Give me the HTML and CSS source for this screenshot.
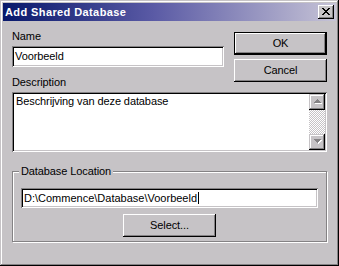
FILE: index.html
```html
<!DOCTYPE html>
<html>
<head>
<meta charset="utf-8">
<link rel="stylesheet" href="styles.css">
</head>
<body>
<div class="window">
  <div class="titlebar">
    <span class="title">Add Shared Database</span>
    <div class="close">
      <svg width="8" height="7" viewBox="0 0 8 7" shape-rendering="crispEdges"><path fill="#000" d="M0 0h2v1H0zM6 0h2v1H6zM1 1h2v1H1zM5 1h2v1H5zM2 2h4v1H2zM3 3h2v1H3zM2 4h4v1H2zM1 5h2v1H1zM5 5h2v1H5zM0 6h2v1H0zM6 6h2v1H6z"/></svg>
    </div>
  </div>
  <div class="body">
    <div class="top">
      <div class="label name-label">Name</div>
      <div class="field name-field">Voorbeeld</div>
      <div class="label desc-label">Description</div>
      <div class="buttons">
        <div class="btn default"><span class="btn-inner">OK</span></div>
        <div class="btn"><span class="btn-inner">Cancel</span></div>
      </div>
      <div class="textarea">
        <div class="textarea-text">Beschrijving van deze database</div>
        <div class="scrollbar">
          <div class="sb-btn">
            <svg width="8" height="5" viewBox="0 0 8 5" shape-rendering="crispEdges"><path fill="#fff" transform="translate(1 1)" d="M3 0h1v1H3zM2 1h3v1H2zM1 2h5v1H1zM0 3h7v1H0z"/><path fill="#848284" d="M3 0h1v1H3zM2 1h3v1H2zM1 2h5v1H1zM0 3h7v1H0z"/></svg>
          </div>
          <div class="sb-track"></div>
          <div class="sb-btn">
            <svg width="8" height="5" viewBox="0 0 8 5" shape-rendering="crispEdges"><path fill="#fff" transform="translate(1 1)" d="M0 0h7v1H0zM1 1h5v1H1zM2 2h3v1H2zM3 3h1v1H3z"/><path fill="#848284" d="M0 0h7v1H0zM1 1h5v1H1zM2 2h3v1H2zM3 3h1v1H3z"/></svg>
          </div>
        </div>
      </div>
    </div>
    <fieldset class="group">
      <legend class="group-legend">Database Location</legend>
      <div class="field path-field">D:\Commence\Database\Voorbeeld<span class="caret"></span></div>
      <div class="btn select-btn"><span class="btn-inner">Select...</span></div>
    </fieldset>
  </div>
</div>
</body>
</html>
```
FILE: styles.css
```css
* {
  box-sizing: border-box;
}

html,
body {
  margin: 0;
  padding: 0;
  background: #c6c3c6;
}

body {
  font-family: "Liberation Sans", Arial, sans-serif;
  font-size: 11px;
  line-height: 13px;
  letter-spacing: -0.1px;
  color: #000;
}

.window {
  width: 339px;
  height: 266px;
  padding: 3px;
  background: #c6c3c6;
  box-shadow:
    inset -1px -1px #000,
    inset 1px 1px #c6c3c6,
    inset -2px -2px #848284,
    inset 2px 2px #fff;
}

.titlebar {
  height: 18px;
  display: flex;
  align-items: center;
  justify-content: space-between;
  padding: 0 2px 0 2px;
  background: linear-gradient(90deg, #08186b 0%, #5a5aa5 45%, #c6c3d6 100%);
}

.title {
  color: #fff;
  font-weight: bold;
  font-size: 11px;
  letter-spacing: 0.4px;
}

.close {
  width: 16px;
  height: 14px;
  display: flex;
  align-items: flex-start;
  padding: 3px 0 0 4px;
  background: #c6c3c6;
  box-shadow:
    inset -1px -1px #000,
    inset 1px 1px #fff,
    inset -2px -2px #848284;
}

.close svg {
  display: block;
}

.body {
  padding: 9px 9px 0 9px;
}

.top {
  display: grid;
  grid-template-columns: 212px 93px;
  column-gap: 10px;
}

.label {
  grid-column: 1;
  height: 13px;
  white-space: nowrap;
}

.name-label {
  grid-row: 1;
}

.name-field {
  grid-row: 2;
  grid-column: 1;
  margin-top: 3px;
  height: 21px;
  line-height: 17px;
}

.desc-label {
  grid-row: 3;
  margin-top: 9px;
}

.field {
  background: #fff;
  padding: 2px 1px 2px 3px;
  white-space: nowrap;
  box-shadow:
    inset 1px 1px #848284,
    inset -1px -1px #fff,
    inset 2px 2px #000,
    inset -2px -2px #c6c3c6;
}

.buttons {
  grid-column: 2;
  grid-row: 1 / 4;
  margin-top: 2px;
  display: flex;
  flex-direction: column;
  gap: 4px;
}

.btn {
  width: 93px;
  height: 23px;
  display: flex;
  align-items: center;
  justify-content: center;
  background: #c6c3c6;
  box-shadow:
    inset -1px -1px #000,
    inset 1px 1px #fff,
    inset -2px -2px #848284;
}

.btn.default {
  box-shadow:
    inset 0 0 0 1px #000,
    inset -2px -2px #000,
    inset 2px 2px #fff,
    inset -3px -3px #848284;
}

.btn-inner {
  display: block;
}

.textarea {
  grid-column: 1 / 3;
  grid-row: 4;
  margin-top: 3px;
  height: 60px;
  display: flex;
  padding: 2px;
  background: #fff;
  box-shadow:
    inset 1px 1px #848284,
    inset -1px -1px #fff,
    inset 2px 2px #000,
    inset -2px -2px #c6c3c6;
}

.textarea-text {
  flex: 1;
  padding: 1px 2px;
}

.scrollbar {
  width: 16px;
  display: flex;
  flex-direction: column;
}

.sb-btn {
  width: 16px;
  height: 16px;
  display: flex;
  align-items: center;
  justify-content: center;
  padding: 0 0 1px 1px;
  background: #c6c3c6;
  box-shadow:
    inset -1px -1px #000,
    inset 1px 1px #c6c3c6,
    inset -2px -2px #848284,
    inset 2px 2px #fff;
}

.sb-btn svg {
  display: block;
}

.sb-track {
  flex: 1;
  background-color: #c6c3c6;
  background-image: conic-gradient(#fff 0 25%, #c6c3c6 0 50%, #fff 0 75%, #c6c3c6 0);
  background-size: 2px 2px;
}

.group {
  width: 314px;
  margin: 13px 0 0 0;
  padding: 0 8px 4px 8px;
  border: 1px solid #848284;
  box-shadow:
    inset 1px 1px #fff,
    1px 1px #fff;
}

.group-legend {
  padding: 0 2px;
  margin-left: -2px;
  background: #c6c3c6;
  line-height: 13px;
}

.path-field {
  width: 297px;
  height: 20px;
  margin-top: 10px;
  line-height: 16px;
  padding-left: 3px;
  letter-spacing: 0;
}

.caret {
  display: inline-block;
  width: 1px;
  height: 12px;
  background: #000;
  vertical-align: -2px;
  margin-left: 1px;
}

.select-btn {
  margin: 6px auto 0 auto;
}
```
